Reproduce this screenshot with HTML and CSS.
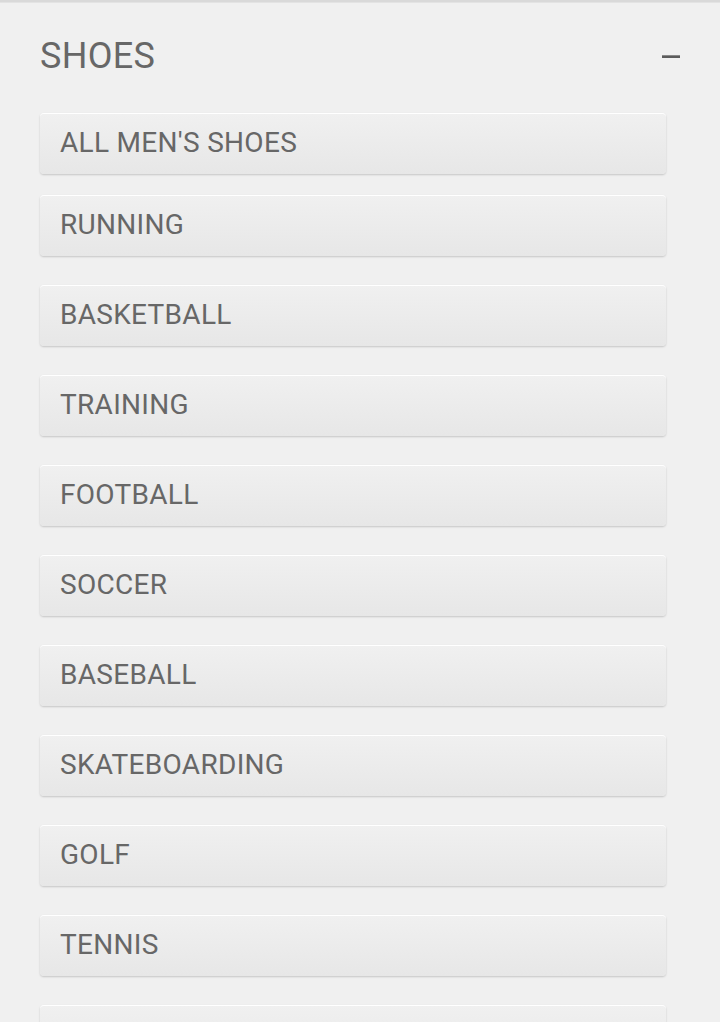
FILE: index.html
```html
<!DOCTYPE html>
<html>
<head>
<meta charset="utf-8">
<link rel="stylesheet" href="styles.css">
</head>
<body>
<div class="panel">
  <div class="header">
    <h2 class="title">SHOES</h2>
    <span class="minus"></span>
  </div>
  <ul class="list">
    <li class="item first">ALL MEN'S SHOES</li>
    <li class="item">RUNNING</li>
    <li class="item">BASKETBALL</li>
    <li class="item">TRAINING</li>
    <li class="item">FOOTBALL</li>
    <li class="item">SOCCER</li>
    <li class="item">BASEBALL</li>
    <li class="item">SKATEBOARDING</li>
    <li class="item">GOLF</li>
    <li class="item">TENNIS</li>
    <li class="item empty"></li>
  </ul>
</div>
</body>
</html>
```
FILE: styles.css
```css
html, body {
  margin: 0;
  padding: 0;
  background: #f0f0f0;
  height: 1022px;
  overflow: hidden;
}
.panel {
  border-top: 2px solid #d9d9d9;
  box-shadow: inset 0 1px 0 #e3e3e3;
  font-family: Roboto, "Liberation Sans", sans-serif;
  color: #676767;
}
.header {
  display: flex;
  align-items: center;
  justify-content: space-between;
  padding: 36px 40px 0 40px;
}
.title {
  margin: 0;
  font-size: 36px;
  line-height: 36px;
  font-weight: 400;
  letter-spacing: 0.3px;
  color: #676767;
}
.minus {
  width: 18px;
  height: 3px;
  background: #5c5c5c;
  border-top: 1px solid #8a8a8a;
  box-sizing: border-box;
  margin-top: 1px;
}
.list {
  list-style: none;
  margin: 39px 54px 0 40px;
  padding: 0;
}
.item {
  border-top: 1px solid #fff;
  border-radius: 4px;
  background: linear-gradient(#f0f0f0, #e7e7e7);
  box-shadow: 0 1px 2px rgba(0,0,0,0.18);
  padding: 0 20px 2px 20px;
  line-height: 58px;
  height: 58px;
  font-size: 28px;
  letter-spacing: 0.3px;
  margin-bottom: 29px;
}
.item.first {
  margin-bottom: 21px;
}
```
